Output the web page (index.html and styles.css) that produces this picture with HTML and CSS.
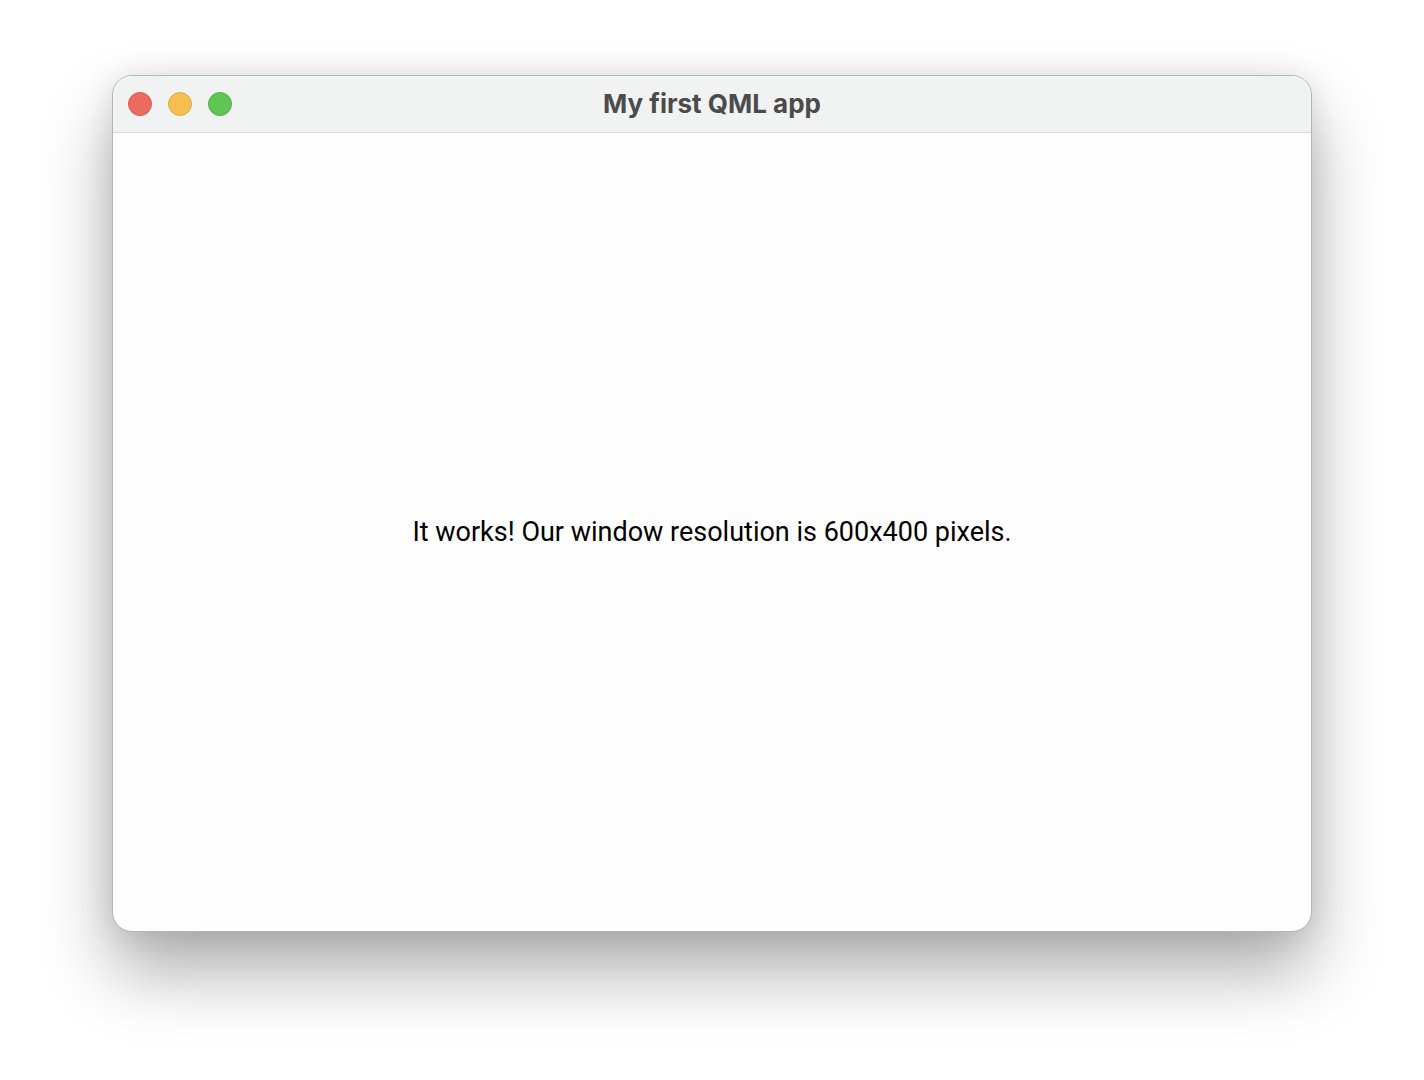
FILE: index.html
```html
<!DOCTYPE html>
<html>
<head>
<meta charset="utf-8">
<link rel="stylesheet" href="styles.css">
</head>
<body>
<div class="desk">
  <div class="window">
    <div class="titlebar">
      <div class="lights">
        <span class="light red"></span>
        <span class="light yellow"></span>
        <span class="light green"></span>
      </div>
      <div class="title">My first QML app</div>
    </div>
    <div class="content">
      <p class="message">It works! Our window resolution is 600x400 pixels.</p>
    </div>
  </div>
</div>
</body>
</html>
```
FILE: styles.css
```css
html, body {
  margin: 0;
  padding: 0;
  background: #ffffff;
}
.desk {
  width: 1424px;
  height: 1080px;
  padding-top: 75px;
  box-sizing: border-box;
}
.window {
  width: 1200px;
  height: 857px;
  margin-left: 112px;
  border-radius: 20px;
  background: #fefefe;
  overflow: hidden;
  box-sizing: border-box;
  border: 1px solid #b4b4b4;
  box-shadow: 0 40px 70px rgba(0,0,0,0.32), 0 0 30px rgba(0,0,0,0.10);
  display: flex;
  flex-direction: column;
}
.titlebar {
  height: 56px;
  flex: none;
  background: #f1f2f2;
  border-bottom: 1px solid #d9d9d9;
  display: flex;
  align-items: center;
  position: relative;
}
.lights {
  display: flex;
  gap: 16px;
  padding-left: 15px;
}
.light {
  width: 24px;
  height: 24px;
  border-radius: 50%;
  box-sizing: border-box;
}
.red { background: #ed6a5e; border: 1px solid #d75a4f; }
.yellow { background: #f5bf4f; border: 1px solid #dea940; }
.green { background: #61c554; border: 1px solid #53ad47; }
.title {
  position: absolute;
  left: 0;
  right: 0;
  top: 13px;
  text-align: center;
  font-family: Inter, "Liberation Sans", sans-serif;
  font-weight: 700;
  font-size: 26px;
  line-height: 30px;
  color: #4b4b4b;
}
.content {
  flex: 1;
  display: flex;
  align-items: center;
  justify-content: center;
}
.message {
  margin: 0;
  font-family: Roboto, "Liberation Sans", sans-serif;
  font-size: 27px;
  color: #000;
}
```
